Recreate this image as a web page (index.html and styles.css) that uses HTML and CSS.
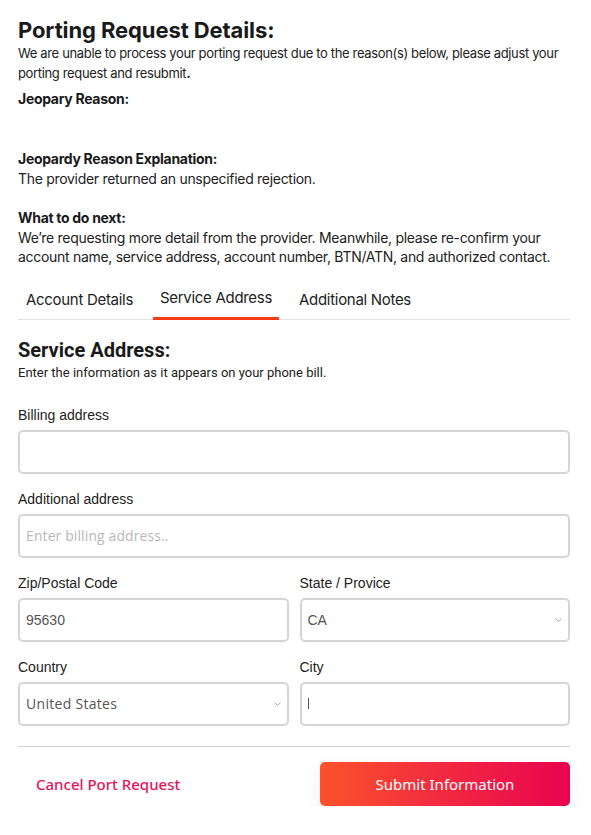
FILE: index.html
```html
<!DOCTYPE html>
<html>
<head>
<meta charset="utf-8">
<link rel="stylesheet" href="styles.css">
</head>
<body>
<div class="page">
  <section class="details">
    <h1 class="title">Porting Request Details:</h1>
    <p class="text small">We are unable to process your porting request due to the reason(s) below, please adjust your porting request and resubmit<b>.</b></p>
    <h3 class="subhead">Jeopary Reason:</h3>
    <div class="reason-empty"></div>
    <h3 class="subhead">Jeopardy Reason Explanation:</h3>
    <p class="text">The provider returned an unspecified rejection.</p>
    <h3 class="subhead next">What to do next:</h3>
    <p class="text">We’re requesting more detail from the provider. Meanwhile, please re-confirm your account name, service address, account number, BTN/ATN, and authorized contact.</p>
  </section>

  <nav class="tabs">
    <div class="tab">Account Details</div>
    <div class="tab active">Service Address</div>
    <div class="tab">Additional Notes</div>
  </nav>

  <section class="form">
    <h2 class="form-title">Service Address:</h2>
    <p class="form-sub">Enter the information as it appears on your phone bill.</p>

    <div class="field first">
      <label class="label">Billing address</label>
      <div class="input"></div>
    </div>
    <div class="field">
      <label class="label">Additional address</label>
      <div class="input placeholder">Enter billing address..</div>
    </div>
    <div class="row">
      <div class="field">
        <label class="label">Zip/Postal Code</label>
        <div class="input value">95630</div>
      </div>
      <div class="field">
        <label class="label">State / Provice</label>
        <div class="input value select">CA
          <svg class="chev" viewBox="0 0 7 4" width="7" height="4"><path d="M0.5 0.5 L3.5 3.5 L6.5 0.5" fill="none" stroke="#a8a8a8" stroke-width="1"/></svg>
        </div>
      </div>
    </div>
    <div class="row">
      <div class="field">
        <label class="label">Country</label>
        <div class="input value select poppins">United States
          <svg class="chev" viewBox="0 0 7 4" width="7" height="4"><path d="M0.5 0.5 L3.5 3.5 L6.5 0.5" fill="none" stroke="#a8a8a8" stroke-width="1"/></svg>
        </div>
      </div>
      <div class="field">
        <label class="label">City</label>
        <div class="input value"><span class="caret"></span></div>
      </div>
    </div>
  </section>

  <footer class="actions">
    <a class="cancel">Cancel Port Request</a>
    <button class="submit">Submit Information</button>
  </footer>
</div>
</body>
</html>
```

FILE: styles.css
```css
* { box-sizing: border-box; }
html, body { margin: 0; padding: 0; background: #fff; }
body { font-family: Inter, "Noto Sans", sans-serif; color: #1d1d1f; }
.page { width: 591px; padding: 17px 21px 0 18px; }

.title { font-size: 22px; font-weight: 700; margin: 0; line-height: 26px; letter-spacing: -0.1px; color: #1a1a1a; }
.text { font-size: 14px; line-height: 19.5px; margin: 0; letter-spacing: -0.3px; color: #222; }
.text.small { font-size: 13px; line-height: 20px; letter-spacing: -0.35px; }
.text b { font-weight: 800; }
.subhead { font-size: 14px; font-weight: 700; margin: 4px 0 0; line-height: 20px; letter-spacing: -0.3px; color: #1a1a1a; }
.text.small + .subhead { margin-top: 6px; }
.reason-empty { height: 36px; }
.subhead.next { margin-top: 19px; }

.tabs { display: flex; margin-top: 13px; border-bottom: 1px solid #e2e2e2; height: 40px; align-items: stretch; }
.tab { font-size: 15px; color: #222; padding: 10px 8px 0; letter-spacing: -0.3px; margin-right: 12px; }
.tab.active { border-bottom: 3px solid #fa3c14; padding: 8px 7px 0; margin-bottom: -1px; margin-right: 12px; }

.form-title { font-family: Roboto, sans-serif; font-weight: 700; font-size: 20px; margin: 19px 0 0; line-height: 23px; color: #1a1a1a; }
.form-sub { font-family: Roboto, sans-serif; font-size: 13px; margin: 3px 0 0; line-height: 15px; color: #222; }

.field { display: flex; flex-direction: column; margin-top: 17px; }
.field.first { margin-top: 27px; }
.label { font-family: "Liberation Sans", Arial, sans-serif; font-size: 14px; line-height: 16px; color: #222; margin-bottom: 7px; }
.input { height: 44px; border: 2px solid #d5d5d5; border-radius: 5px; display: flex; align-items: center; padding: 0 6px; font-family: "Liberation Sans", Arial, sans-serif; font-size: 14px; color: #555; }
.placeholder { font-family: "Open Sans", sans-serif; font-size: 14px; letter-spacing: 0.1px; color: #b8b8b8; }
.poppins { font-family: "Open Sans", sans-serif; font-size: 14px; letter-spacing: 0.3px; color: #555; }
.select { justify-content: space-between; }
.chev { margin-right: 0; }
.caret { display: inline-block; width: 1px; height: 11px; background: #555; }

.row { display: grid; grid-template-columns: 1fr 1fr; column-gap: 11px; }

.actions { margin-top: 20px; border-top: 1px solid #d3d3d3; display: flex; justify-content: space-between; align-items: center; padding-top: 15px; }
.cancel { font-family: "Noto Sans", sans-serif; font-size: 15px; font-weight: 500; color: #e8145a; margin-left: 18px; }
.submit { width: 250px; height: 44px; border: 0; border-radius: 5px; background: linear-gradient(90deg, #fb522b 0%, #f22d3f 45%, #e8034f 100%); color: #fff; font-family: "Noto Sans", sans-serif; font-size: 15px; font-weight: 400; box-shadow: 0 6px 16px rgba(120, 120, 200, 0.12); }
```
